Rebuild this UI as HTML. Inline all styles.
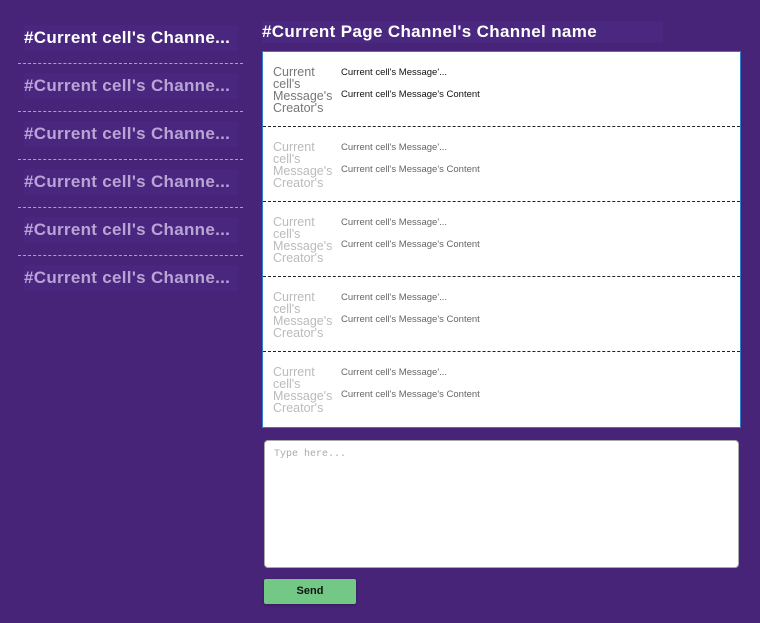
<!DOCTYPE html>
<html><head><style>
*{margin:0;padding:0;box-sizing:border-box}
body{width:760px;height:623px;background:#482479;font-family:"Liberation Sans",Arial,sans-serif;position:relative;overflow:hidden}
.ch{position:absolute;left:18px;width:225px;height:48px;border-bottom:1px dashed #b9a87a}
.ch span{position:absolute;left:6px;top:9px;width:214px;height:26px;background:#4a277e;font-weight:bold;font-size:17px;letter-spacing:0.3px;line-height:26px;color:#b9a4d6;white-space:nowrap;overflow:hidden}
.ch.a span{color:#fff}
.hdr{position:absolute;left:262px;top:21px;width:401px;height:22px;background:#4b2880;color:#fff;font-weight:bold;font-size:17px;letter-spacing:0.35px;line-height:22px;white-space:nowrap}
.panel{position:absolute;left:262px;top:51px;width:479px;height:377px;background:#fff;border:1px solid #2f7fc8}
.row{position:absolute;left:0;width:477px;height:75px;border-bottom:1px dashed #222}
.cr{position:absolute;left:10px;top:14px;width:60px;font-size:12.5px;line-height:12px;color:#bbb;overflow:hidden;white-space:normal}
.m1,.m2{position:absolute;left:78px;font-size:9.5px;color:#666;white-space:nowrap}
.m1{top:15px}.m2{top:37px}
.row.f .cr{color:#777}.row.f .m1,.row.f .m2{color:#111}
.ta{position:absolute;left:264px;top:440px;width:475px;height:128px;background:#fff;border:1px solid #aaa;border-radius:4px}
.ta span{position:absolute;left:9px;top:8px;font-family:"Liberation Mono",monospace;font-size:10px;color:#aaa}
.btn{position:absolute;left:264px;top:579px;width:92px;height:25px;background:#74c885;border-radius:2px;font-weight:bold;font-size:11px;text-align:center;line-height:25px;color:#111;box-shadow:0 1px 3px rgba(0,0,0,.3)}
</style></head><body>
<div class="ch a" style="top:16px"><span>#Current cell's Channe...</span></div>
<div class="ch" style="top:64px"><span>#Current cell's Channe...</span></div>
<div class="ch" style="top:112px"><span>#Current cell's Channe...</span></div>
<div class="ch" style="top:160px"><span>#Current cell's Channe...</span></div>
<div class="ch" style="top:208px"><span>#Current cell's Channe...</span></div>
<div class="ch" style="top:256px;border-bottom:none"><span>#Current cell's Channe...</span></div>
<div class="hdr">#Current Page Channel's Channel name</div>
<div class="panel">
<div class="row f" style="top:0"><div class="cr">Current cell's Message's Creator's</div><div class="m1">Current cell's Message'...</div><div class="m2">Current cell's Message's Content</div></div>
<div class="row" style="top:75px"><div class="cr">Current cell's Message's Creator's</div><div class="m1">Current cell's Message'...</div><div class="m2">Current cell's Message's Content</div></div>
<div class="row" style="top:150px"><div class="cr">Current cell's Message's Creator's</div><div class="m1">Current cell's Message'...</div><div class="m2">Current cell's Message's Content</div></div>
<div class="row" style="top:225px"><div class="cr">Current cell's Message's Creator's</div><div class="m1">Current cell's Message'...</div><div class="m2">Current cell's Message's Content</div></div>
<div class="row" style="top:300px;border-bottom:none"><div class="cr">Current cell's Message's Creator's</div><div class="m1">Current cell's Message'...</div><div class="m2">Current cell's Message's Content</div></div>
</div>
<div class="ta"><span>Type here...</span></div>
<div class="btn">Send</div>
</body></html>
